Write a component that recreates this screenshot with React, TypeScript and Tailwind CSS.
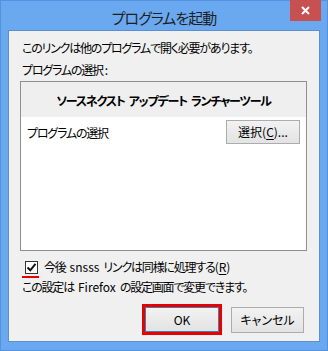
import React from 'react';

const jp = "font-['Noto_Sans_CJK_JP','Noto_Sans',sans-serif] [font-feature-settings:'palt']";

function Btn({ children, focused }: { children: React.ReactNode; focused?: boolean }) {
    return (
        <div
            className={
                'h-full w-full flex items-center justify-center bg-gradient-to-b from-[#f2f2f2] to-[#e3e3e3] text-[12px] text-black border ' +
                (focused ? 'border-[#3c7fb1]' : 'border-[#acacac]')
            }
        >
            {children}
        </div>
    );
}

export default function App() {
    return (
        <div className={`w-[328px] h-[351px] bg-[#6aa8ef] border border-[#5592dc] flex flex-col ${jp}`}>
            {/* title bar */}
            <div className="relative h-[29px] flex items-center justify-center">
                <span className="text-[15px] text-[#1e1e1e] leading-none mt-[3px] tracking-[-1px]">プログラムを起動</span>
                <div className="absolute right-[6px] top-[-1px] w-[31px] h-[21px] bg-[#c75050] flex items-center justify-center">
                    <svg width="9" height="9" viewBox="0 0 9 9">
                        <path d="M1 1 L8 8 M8 1 L1 8" stroke="#fff" strokeWidth="2" />
                    </svg>
                </div>
            </div>

            {/* client area */}
            <div className="mx-[7px] h-[312px] border border-[#5b8fd4] bg-[#f0f0f0] pl-[11px] pt-[9px] text-black tracking-[-1.2px]">
                <div className="ml-[2px] text-[12px] leading-[16px]">このリンクは他のプログラムで開く必要があります。</div>
                <div className="ml-[2px] mt-[6px] text-[12px] leading-[16px]">
                    プログラムの選択<span className="inline-block ml-[2px] tracking-normal">:</span>
                </div>

                <div className="mt-[3px] w-[287px] h-[170px] border border-[#8e8f8f] bg-white flex flex-col">
                    <div className="h-[35px] bg-[#efefef] flex items-center justify-center gap-[4px] pt-[3px] text-[12px] font-bold">
                        <span>ソースネクスト</span>
                        <span>アップデート</span>
                        <span>ランチャーツール</span>
                    </div>
                    <div className="flex items-center justify-between pl-[6px] pr-[6px] mt-[3px]">
                        <span className="text-[12px] mt-[1px]">プログラムの選択</span>
                        <div className="w-[74px] h-[24px] tracking-normal">
                            <Btn>
                                選択(<span className="underline decoration-1 underline-offset-2">C</span>)...
                            </Btn>
                        </div>
                    </div>
                </div>

                <div className="relative mt-[8px] flex items-center h-[16px]">
                    <div className="ml-[5px] w-[13px] h-[13px] border border-[#333] bg-white flex items-center justify-center">
                        <svg width="11" height="11" viewBox="0 0 11 11">
                            <path d="M1.5 5.5 L4.3 8.3 L9.5 1.8" stroke="#111" strokeWidth="2" fill="none" />
                        </svg>
                    </div>
                    <span className="ml-[6px] text-[12px] leading-[16px]">
                        今後<span className="inline-block mx-[4px] tracking-normal">snsss</span>リンクは同様に処理する
                        <span className="tracking-normal">
                            (<span className="underline decoration-1 underline-offset-2">R</span>)
                        </span>
                    </span>
                    <div className="absolute left-[2px] top-[17px] w-[17px] h-[2px] bg-[#e60000]" />
                </div>

                <div className="ml-[2px] mt-[4px] text-[12px] leading-[16px]">
                    この設定は<span className="inline-block mx-[4px] tracking-normal">Firefox</span>の設定画面で変更できます。
                </div>

                <div className="mt-[9px] flex justify-end items-center gap-[9px] pr-[15px] tracking-normal">
                    <div className="w-[80px] h-[31px] border-[3px] border-[#e60000]">
                        <Btn focused>OK</Btn>
                    </div>
                    <div className="w-[73px] h-[26px]">
                        <Btn>キャンセル</Btn>
                    </div>
                </div>
            </div>
        </div>
    );
}
